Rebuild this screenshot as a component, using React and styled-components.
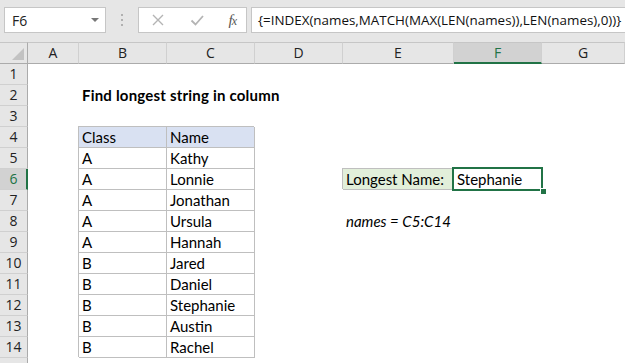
import React from 'react';
import styled, { createGlobalStyle, css } from 'styled-components';

const GlobalStyle = createGlobalStyle`
  html, body {
    margin: 0;
    padding: 0;
    background: #ffffff;
    overflow: hidden;
  }
`;

const GREEN = '#217346';
const GRID = '#bfbfbf';
const CELL_FONT = `Lato, "Liberation Sans", sans-serif`;
const UI_FONT = `"Open Sans", "Liberation Sans", sans-serif`;

const Window = styled.div`
  width: 625px;
  height: 363px;
  overflow: hidden;
  background: #ffffff;
  display: flex;
  flex-direction: column;
`;

const FormulaBar = styled.div`
  height: 42px;
  flex: none;
  background: #e6e6e6;
  display: flex;
  align-items: flex-start;
  padding: 7px 0 0 4px;
  box-sizing: border-box;
`;

const Box = styled.div`
  height: 26px;
  box-sizing: border-box;
  background: #ffffff;
  border: 1px solid #c6c6c6;
  display: flex;
  align-items: center;
  font-family: ${UI_FONT};
  font-size: 14px;
  color: #222;
`;

const NameBox = styled(Box)`
  width: 102px;
  padding: 0 6px 0 7px;
  justify-content: space-between;
`;

const DropArrow = styled.span`
  width: 0;
  height: 0;
  border-left: 4px solid transparent;
  border-right: 4px solid transparent;
  border-top: 4px solid #777;
`;

const Dots = styled.div`
  width: 32px;
  height: 26px;
  display: flex;
  flex-direction: column;
  align-items: center;
  justify-content: center;
  gap: 3px;
`;

const Dot = styled.span`
  width: 2px;
  height: 2px;
  background: #b0b0b0;
`;

const FxButtons = styled(Box)`
  width: 109px;
  padding: 0 10px 0 12px;
  justify-content: space-between;
`;

const Fx = styled.span`
  font-family: "Liberation Serif", serif;
  font-style: italic;
  font-size: 15px;
  color: #555;
  letter-spacing: -1px;
  small {
    font-size: 12px;
  }
`;

const FormulaInput = styled(Box)`
  flex: 1;
  margin-left: 4px;
  margin-right: -10px;
  padding-left: 6px;
  white-space: nowrap;
  font-size: 13.4px;
  color: #111;
`;

const Sheet = styled.div`
  flex: 1;
  display: flex;
  flex-direction: column;
  background: #ffffff;
`;

const Row = styled.div`
  display: flex;
  flex: none;
  height: ${p => (p.$head ? 22 : 21)}px;
`;

const Corner = styled.div`
  width: 28px;
  flex: none;
  box-sizing: border-box;
  background: #e6e6e6;
  border-top: 1px solid #c6c6c6;
  border-bottom: 1px solid #ababab;
  border-right: 1px solid #ababab;
  position: relative;
  &::after {
    content: '';
    position: absolute;
    right: 3px;
    bottom: 3px;
    width: 0;
    height: 0;
    border-left: 12px solid transparent;
    border-bottom: 12px solid #c2c2c2;
  }
`;

const ColHead = styled.div`
  width: ${p => p.$w}px;
  flex: ${p => (p.$w ? 'none' : 1)};
  box-sizing: border-box;
  background: ${p => (p.$active ? '#d2d2d2' : '#e6e6e6')};
  border-top: 1px solid #c6c6c6;
  border-bottom: ${p => (p.$active ? `2px solid ${GREEN}` : '1px solid #ababab')};
  border-right: 1px solid #d0d0d0;
  text-align: center;
  font-family: ${UI_FONT};
  font-size: 14px;
  line-height: 20px;
  color: ${p => (p.$active ? GREEN : '#222')};
`;

const RowHead = styled.div`
  width: 28px;
  flex: none;
  box-sizing: border-box;
  background: ${p => (p.$active ? '#d2d2d2' : '#e6e6e6')};
  border-bottom: 1px solid #d0d0d0;
  border-right: ${p => (p.$active ? `2px solid ${GREEN}` : '1px solid #ababab')};
  text-align: center;
  font-family: ${UI_FONT};
  font-size: 14px;
  line-height: 20px;
  color: ${p => (p.$active ? GREEN : '#222')};
  padding-left: ${p => (p.$active ? 1 : 0)}px;
`;

const boxed = css`
  box-shadow: inset -1px -1px 0 ${GRID}, -1px -1px 0 ${GRID};
`;

const Cell = styled.div`
  width: ${p => p.$w}px;
  flex: ${p => (p.$w ? 'none' : 1)};
  box-sizing: border-box;
  padding: 0 3px;
  font-family: ${CELL_FONT};
  font-size: 15px;
  line-height: 21px;
  color: #000;
  white-space: nowrap;
  overflow: visible;
  font-weight: ${p => (p.$bold ? 700 : 400)};
  font-style: ${p => (p.$italic ? 'italic' : 'normal')};
  letter-spacing: ${p => (p.$bold ? '0.2px' : 'normal')};
  background: ${p =>
    p.$fill === 'blue' ? '#d9e1f2' : p.$fill === 'green' ? '#e2efda' : 'transparent'};
  ${p => p.$boxed && boxed}
  ${p =>
    p.$selected &&
    css`
      position: relative;
      &::after {
        content: '';
        position: absolute;
        left: -2px;
        top: -2px;
        right: -1px;
        bottom: -1px;
        border: 2px solid ${GREEN};
      }
      &::before {
        content: '';
        position: absolute;
        right: -4px;
        bottom: -4px;
        width: 5px;
        height: 5px;
        background: ${GREEN};
        border-left: 1px solid #fff;
        border-top: 1px solid #fff;
        z-index: 1;
      }
    `}
`;

const COLS = [
  { id: 'A', w: 51 },
  { id: 'B', w: 88 },
  { id: 'C', w: 88 },
  { id: 'D', w: 88 },
  { id: 'E', w: 111 },
  { id: 'F', w: 88 },
  { id: 'G', w: 0 },
];

const people = [
  ['A', 'Kathy'],
  ['A', 'Lonnie'],
  ['A', 'Jonathan'],
  ['A', 'Ursula'],
  ['A', 'Hannah'],
  ['B', 'Jared'],
  ['B', 'Daniel'],
  ['B', 'Stephanie'],
  ['B', 'Austin'],
  ['B', 'Rachel'],
];

function cellsFor(r) {
  const c = {};
  if (r === 2) c.B = { text: 'Find longest string in column', bold: true };
  if (r === 4) {
    c.B = { text: 'Class', boxed: true, fill: 'blue' };
    c.C = { text: 'Name', boxed: true, fill: 'blue' };
  }
  if (r >= 5 && r <= 14) {
    const [cls, name] = people[r - 5];
    c.B = { text: cls, boxed: true };
    c.C = { text: name, boxed: true };
  }
  if (r === 6) {
    c.E = { text: 'Longest Name:', boxed: true, fill: 'green' };
    c.F = { text: 'Stephanie', selected: true };
  }
  if (r === 8) c.E = { text: 'names = C5:C14', italic: true };
  return c;
}

const XIcon = () => (
  <svg width="14" height="14" viewBox="0 0 14 14">
    <path d="M2 2 L12 12 M12 2 L2 12" stroke="#b4b4b4" strokeWidth="1.4" fill="none" />
  </svg>
);

const CheckIcon = () => (
  <svg width="14" height="14" viewBox="0 0 14 14">
    <path d="M1.5 7.5 L5.5 11.5 L13 3" stroke="#b4b4b4" strokeWidth="1.8" fill="none" />
  </svg>
);

export default function App() {
  // 14 labelled rows, plus the top sliver of row 15 at the bottom edge
  const rows = Array.from({ length: 15 }, (_, i) => i + 1);
  return (
    <Window>
      <GlobalStyle />
      <FormulaBar>
        <NameBox>
          F6
          <DropArrow />
        </NameBox>
        <Dots>
          <Dot />
          <Dot />
          <Dot />
        </Dots>
        <FxButtons>
          <XIcon />
          <CheckIcon />
          <Fx>
            f<small>x</small>
          </Fx>
        </FxButtons>
        <FormulaInput>{'{=INDEX(names,MATCH(MAX(LEN(names)),LEN(names),0))}'}</FormulaInput>
      </FormulaBar>
      <Sheet>
        <Row $head>
          <Corner />
          {COLS.map(col => (
            <ColHead key={col.id} $w={col.w} $active={col.id === 'F'}>
              {col.id}
            </ColHead>
          ))}
        </Row>
        {rows.map(r => {
          const cells = cellsFor(r);
          return (
            <Row key={r}>
              <RowHead $active={r === 6}>{r < 15 ? r : ''}</RowHead>
              {COLS.map(col => {
                const c = cells[col.id] || {};
                return (
                  <Cell
                    key={col.id}
                    $w={col.w}
                    $bold={c.bold}
                    $italic={c.italic}
                    $boxed={c.boxed}
                    $fill={c.fill}
                    $selected={c.selected}
                  >
                    {c.text}
                  </Cell>
                );
              })}
            </Row>
          );
        })}
      </Sheet>
    </Window>
  );
}
